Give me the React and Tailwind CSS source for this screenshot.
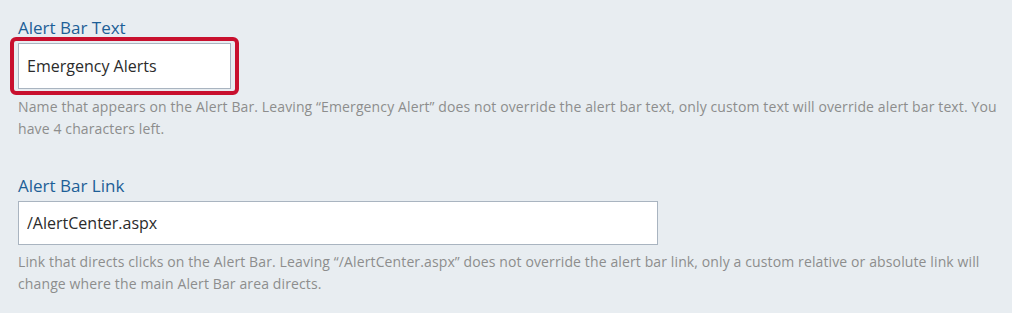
export default function App() {
  return (
    <div className="min-h-screen w-full bg-[#e8edf1] font-['Open_Sans',sans-serif]">
      <div className="w-[1002px] pl-[18px] pt-[17px]">
        <div>
          <label className="block text-[17px] leading-[22px] text-[#1d5f97]">Alert Bar Text</label>
          <div className="-ml-2 mt-[-2px] w-[229px] rounded-md border-4 border-[#c8102e] px-1 py-0.5">
            <input
              type="text"
              defaultValue="Emergency Alerts"
              className="block h-[46px] w-full border border-[#a9b4c0] bg-white px-2 text-[16px] text-[#2b2b2b] outline-none"
            />
          </div>
          <p className="mt-[1px] text-[14px] leading-[22px] tracking-[0.12px] text-[#8d8d8d]">
            Name that appears on the Alert Bar. Leaving “Emergency Alert” does not override the alert bar text, only custom text will override alert bar text. You have 4 characters left.
          </p>
        </div>

        <div className="mt-[35px]">
          <label className="block text-[17px] leading-[22px] text-[#1d5f97]">Alert Bar Link</label>
          <input
            type="text"
            defaultValue="/AlertCenter.aspx"
            className="mt-[4px] block h-[44px] w-[640px] border border-[#a9b4c0] bg-white px-2 text-[16px] text-[#2b2b2b] outline-none"
          />
          <p className="mt-[6px] text-[14px] leading-[22px] tracking-[0.12px] text-[#8d8d8d]">
            Link that directs clicks on the Alert Bar. Leaving “/AlertCenter.aspx” does not override the alert bar link, only a custom relative or absolute link will change where the main Alert Bar area directs.
          </p>
        </div>
      </div>
    </div>
  );
}
